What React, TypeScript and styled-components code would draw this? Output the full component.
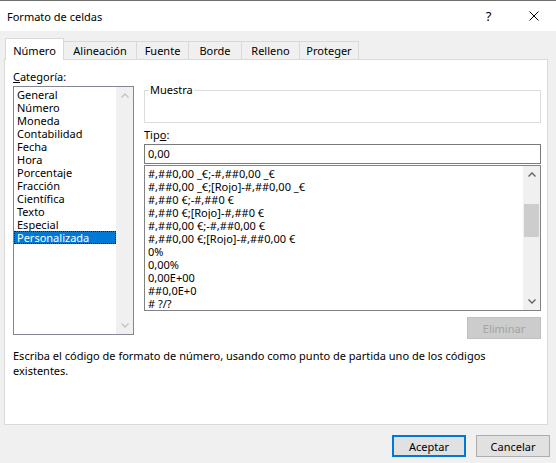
import React from 'react';
import styled, { createGlobalStyle } from 'styled-components';

const GlobalStyle = createGlobalStyle`
  html, body {
    margin: 0;
    padding: 0;
    background: #f0f0f0;
  }
  body {
    font-family: "Noto Sans", "Open Sans", sans-serif;
    font-size: 11px;
    color: #000;
  }
`;

const Window = styled.div`
  width: 556px;
  height: 463px;
  box-sizing: border-box;
  border-top: 1px solid #707070;
  background: #f0f0f0;
  display: flex;
  flex-direction: column;
  overflow: hidden;
`;

const TitleBar = styled.div`
  height: 30px;
  background: #fff;
  display: flex;
  align-items: center;
  padding-left: 7px;
`;

const Title = styled.div`
  flex: 1;
  line-height: 15px;
`;

const TitleButton = styled.div`
  width: 45px;
  height: 30px;
  display: flex;
  align-items: center;
  justify-content: center;
  font-size: 13px;
`;

const Body = styled.div`
  flex: 1;
  display: flex;
  flex-direction: column;
  padding: 7px 8px 0 4px;
`;

const TabStrip = styled.div`
  display: flex;
  align-items: flex-end;
  height: 21px;
  padding-left: 1px;
`;

const Tab = styled.div<{ $w: number; $active?: boolean }>`
  box-sizing: border-box;
  width: ${(p) => p.$w}px;
  height: ${(p) => (p.$active ? 22 : 18)}px;
  margin-bottom: ${(p) => (p.$active ? -1 : 0)}px;
  margin-left: ${(p) => (p.$active ? 0 : -1)}px;
  border: 1px solid #d9d9d9;
  border-bottom: none;
  background: ${(p) => (p.$active ? '#fff' : '#f0f0f0')};
  position: relative;
  z-index: ${(p) => (p.$active ? 2 : 1)};
  display: flex;
  align-items: center;
  justify-content: center;
  line-height: 15px;
  padding-top: ${(p) => (p.$active ? 1 : 0)}px;
  &:first-child {
    margin-left: 0;
  }
`;

const Panel = styled.div`
  box-sizing: border-box;
  height: 366px;
  background: #fff;
  border: 1px solid #d9d9d9;
  padding: 9px 7px 0 8px;
  display: flex;
  flex-direction: column;
`;

const Columns = styled.div`
  display: grid;
  grid-template-columns: 121px 397px;
  column-gap: 10px;
`;

const Column = styled.div`
  display: flex;
  flex-direction: column;
`;

const Label = styled.div`
  line-height: 15px;
`;

const ListBox = styled.div<{ $h: number }>`
  box-sizing: border-box;
  height: ${(p) => p.$h}px;
  border: 1px solid #828790;
  background: #fff;
  display: flex;
  overflow: hidden;
`;

const CategoryList = styled(ListBox)`
  margin-top: 2px;
`;

const Items = styled.div`
  flex: 1;
  min-width: 0;
  padding-top: 1px;
`;

const Item = styled.div<{ $selected?: boolean }>`
  box-sizing: border-box;
  height: 13px;
  line-height: 13px;
  padding-left: 3px;
  white-space: pre;
  overflow: hidden;
  background: ${(p) => (p.$selected ? '#0078d7' : 'transparent')};
  color: ${(p) => (p.$selected ? '#fff' : '#000')};
  outline: ${(p) => (p.$selected ? '1px dotted #202020' : 'none')};
  outline-offset: -1px;
`;

const ScrollBar = styled.div`
  width: 17px;
  background: #f0f0f0;
  display: flex;
  flex-direction: column;
`;

const ScrollArrow = styled.div`
  height: 17px;
  display: flex;
  align-items: center;
  justify-content: center;
`;

const Track = styled.div`
  flex: 1;
  display: flex;
  flex-direction: column;
  align-items: center;
`;

const Thumb = styled.div<{ $top: number; $h: number }>`
  width: 15px;
  margin-top: ${(p) => p.$top}px;
  height: ${(p) => p.$h}px;
  background: #cdcdcd;
`;

const GroupBox = styled.fieldset`
  box-sizing: border-box;
  margin: 14px 0 0;
  padding: 0;
  height: 40px;
  border: 1px solid #dcdcdc;
  border-radius: 0;
`;

const Legend = styled.legend`
  margin-left: 4px;
  padding: 0 1px;
  line-height: 14px;
`;

const TipoLabel = styled(Label)`
  margin-top: 4px;
`;

const TextInput = styled.div`
  box-sizing: border-box;
  height: 20px;
  margin-top: 2px;
  border: 1px solid #7a7a7a;
  padding-left: 3px;
  line-height: 18px;
`;

const FormatList = styled(ListBox)`
  margin-top: 1px;
  border-color: #828282;
`;

const DisabledButton = styled.div`
  align-self: flex-end;
  box-sizing: border-box;
  width: 74px;
  height: 22px;
  margin-top: 6px;
  background: #cccccc;
  border: 1px solid #bfbfbf;
  color: #a3a3a3;
  display: flex;
  align-items: center;
  justify-content: center;
`;

const Description = styled.div`
  margin-top: 9px;
  line-height: 15px;
`;

const Footer = styled.div`
  display: flex;
  justify-content: flex-end;
  gap: 10px;
  margin-top: 10px;
  margin-right: -2px;
`;

const Button = styled.div<{ $default?: boolean }>`
  box-sizing: border-box;
  width: 74px;
  height: 22px;
  background: #e1e1e1;
  border: ${(p) => (p.$default ? '2px solid #0078d7' : '1px solid #adadad')};
  display: flex;
  align-items: center;
  justify-content: center;
  line-height: 15px;
`;

const Chevron: React.FC<{ up?: boolean; color: string }> = ({ up, color }) => (
  <svg width="8" height="5" viewBox="0 0 8 5">
    <path
      d={up ? 'M0.5 4.5 L4 1 L7.5 4.5' : 'M0.5 0.5 L4 4 L7.5 0.5'}
      fill="none"
      stroke={color}
      strokeWidth="1.3"
    />
  </svg>
);

const tabs = [
  { label: 'Número', w: 59 },
  { label: 'Alineación', w: 74 },
  { label: 'Fuente', w: 53 },
  { label: 'Borde', w: 54 },
  { label: 'Relleno', w: 59 },
  { label: 'Proteger', w: 60 },
];

const categories = [
  'General',
  'Número',
  'Moneda',
  'Contabilidad',
  'Fecha',
  'Hora',
  'Porcentaje',
  'Fracción',
  'Científica',
  'Texto',
  'Especial',
  'Personalizada',
];

const formats = [
  '#,##0,00 _€;-#,##0,00 _€',
  '#,##0,00 _€;[Rojo]-#,##0,00 _€',
  '#,##0 €;-#,##0 €',
  '#,##0 €;[Rojo]-#,##0 €',
  '#,##0,00 €;-#,##0,00 €',
  '#,##0,00 €;[Rojo]-#,##0,00 €',
  '0%',
  '0,00%',
  '0,00E+00',
  '##0,0E+0',
  '# ?/?',
];

const App: React.FC = () => {
  return (
    <>
      <GlobalStyle />
      <Window>
        <TitleBar>
          <Title>Formato de celdas</Title>
          <TitleButton>?</TitleButton>
          <TitleButton>
            <svg width="10" height="10" viewBox="0 0 10 10">
              <path d="M0.5 0.5 L9.5 9.5 M9.5 0.5 L0.5 9.5" stroke="#000" strokeWidth="1" fill="none" />
            </svg>
          </TitleButton>
        </TitleBar>
        <Body>
          <TabStrip>
            {tabs.map((t, i) => (
              <Tab key={t.label} $w={t.w} $active={i === 0}>
                {t.label}
              </Tab>
            ))}
          </TabStrip>
          <Panel>
            <Columns>
              <Column>
                <Label>
                  <u>C</u>ategoría:
                </Label>
                <CategoryList $h={249}>
                  <Items>
                    {categories.map((c) => (
                      <Item key={c} $selected={c === 'Personalizada'}>
                        {c}
                      </Item>
                    ))}
                  </Items>
                  <ScrollBar>
                    <ScrollArrow>
                      <Chevron up color="#c2c2c2" />
                    </ScrollArrow>
                    <Track />
                    <ScrollArrow>
                      <Chevron color="#c2c2c2" />
                    </ScrollArrow>
                  </ScrollBar>
                </CategoryList>
              </Column>
              <Column>
                <GroupBox>
                  <Legend>Muestra</Legend>
                </GroupBox>
                <TipoLabel>
                  Tip<u>o</u>:
                </TipoLabel>
                <TextInput>0,00</TextInput>
                <FormatList $h={146}>
                  <Items>
                    {formats.map((f) => (
                      <Item key={f}>{f}</Item>
                    ))}
                  </Items>
                  <ScrollBar>
                    <ScrollArrow>
                      <Chevron up color="#606060" />
                    </ScrollArrow>
                    <Track>
                      <Thumb $top={21} $h={33} />
                    </Track>
                    <ScrollArrow>
                      <Chevron color="#606060" />
                    </ScrollArrow>
                  </ScrollBar>
                </FormatList>
                <DisabledButton>Eliminar</DisabledButton>
              </Column>
            </Columns>
            <Description>
              Escriba el código de formato de número, usando como punto de partida uno de los códigos
              <br />
              existentes.
            </Description>
          </Panel>
          <Footer>
            <Button $default>Aceptar</Button>
            <Button>Cancelar</Button>
          </Footer>
        </Body>
      </Window>
    </>
  );
};

export default App;
